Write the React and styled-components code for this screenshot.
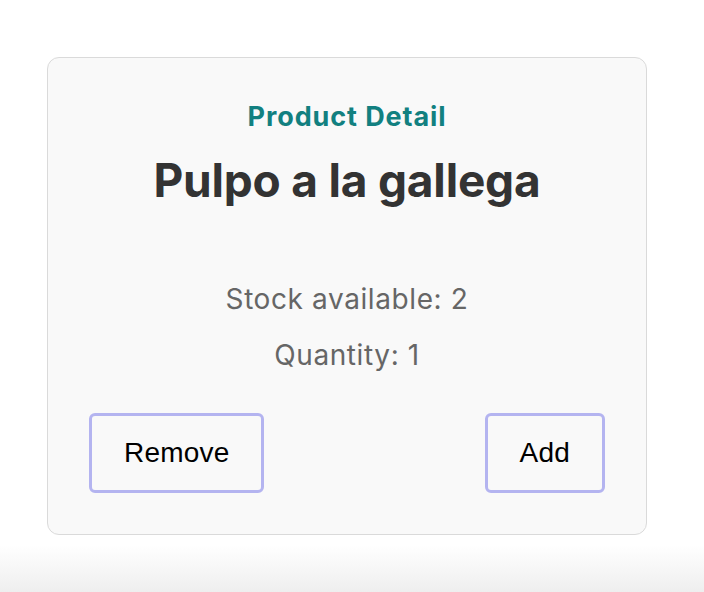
import React from "react";
import styled, { createGlobalStyle } from "styled-components";

const Global = createGlobalStyle`
  html, body { margin: 0; padding: 0; background: #ffffff; }
  body { font-family: Inter, "Noto Sans", sans-serif; }
  * { box-sizing: border-box; }
`;

const Page = styled.div`
  display: flex;
  flex-direction: column;
  align-items: flex-start;
  padding-top: 57px;
  padding-left: 47px;
  min-height: 592px;
  overflow: hidden;
`;

const Card = styled.section`
  width: 600px;
  height: 478px;
  display: flex;
  flex-direction: column;
  align-items: center;
  padding: 43px 41px 0 41px;
  background: #f9f9f9;
  border: 1px solid #dadada;
  border-radius: 12px;
`;

const Subtitle = styled.h3`
  margin: 0;
  font-family: Inter, sans-serif;
  font-weight: 700;
  font-size: 27px;
  line-height: 32px;
  letter-spacing: 0.9px;
  color: #128080;
`;

const Title = styled.h1`
  margin: 19px 0 0;
  font-family: Inter, sans-serif;
  font-weight: 700;
  font-size: 46px;
  line-height: 56px;
  letter-spacing: -0.2px;
  color: #333333;
`;

const Info = styled.p`
  margin: ${(p) => (p.$first ? "74px" : "22px")} 0 0;
  font-family: Inter, sans-serif;
  font-weight: 400;
  font-size: 28px;
  line-height: 34px;
  letter-spacing: 0.6px;
  color: #666666;
`;

const Actions = styled.div`
  align-self: stretch;
  display: flex;
  justify-content: space-between;
  margin-top: 41px;
`;

const Button = styled.button`
  height: 80px;
  padding: 0 32px;
  font-family: "Liberation Sans", Arial, sans-serif;
  font-size: 28px;
  line-height: 32px;
  letter-spacing: 0.2px;
  color: #000000;
  background: transparent;
  border: 3px solid #b4b4f0;
  border-radius: 6px;
  cursor: pointer;
`;

const Fade = styled.div`
  align-self: stretch;
  margin: 10px 0 0 -47px;
  width: 704px;
  height: 60px;
  background: linear-gradient(to bottom, #ffffff 0%, #eeeeee 80%, #ebebeb 100%);
`;

export default function App() {
  return (
    <>
      <Global />
      <Page>
        <Card>
          <Subtitle>Product Detail</Subtitle>
          <Title>Pulpo a la gallega</Title>
          <Info $first>Stock available: 2</Info>
          <Info>Quantity: 1</Info>
          <Actions>
            <Button>Remove</Button>
            <Button>Add</Button>
          </Actions>
        </Card>
        <Fade />
      </Page>
    </>
  );
}
